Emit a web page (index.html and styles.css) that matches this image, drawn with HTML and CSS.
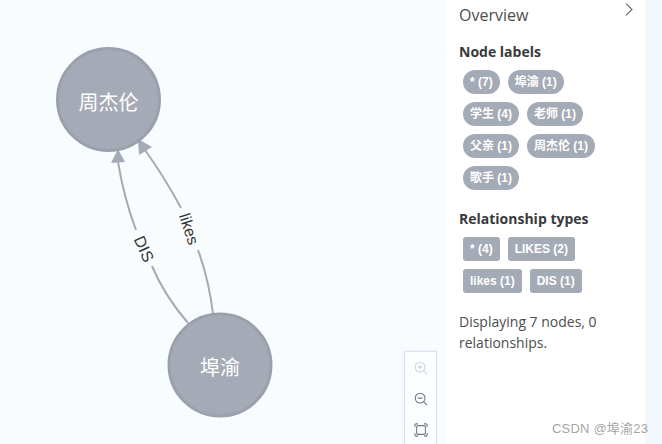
FILE: index.html
```html
<!DOCTYPE html>
<html lang="en">
<head>
<meta charset="utf-8">
<title>Graph overview</title>
<link rel="stylesheet" href="styles.css">
</head>
<body>
<div class="app">
  <main class="canvas">
    <svg class="graph" width="445" height="444" viewBox="0 0 445 444">
      <path class="edge" d="M188 323 Q164 295 152 266"/>
      <path class="edge" d="M136 230 Q124 198 118 162"/>
      <polygon class="arrow" points="118,149 111,163 125,162"/>
      <path class="edge" d="M213 314 Q209 280 198 250"/>
      <path class="edge" d="M181 208 Q165 178 145 150"/>
      <polygon class="arrow" points="138,139 139,155 152,147"/>
      <text class="edge-label" transform="translate(144 249) rotate(66)">DIS</text>
      <text class="edge-label" transform="translate(189 229) rotate(72)">likes</text>
      <circle class="node" cx="108.5" cy="99.5" r="51"/>
      <text class="node-label" x="108.5" y="110">周杰伦</text>
      <circle class="node" cx="220" cy="365" r="51"/>
      <text class="node-label" x="220" y="375">埠渝</text>
    </svg>
    <div class="zoom-bar">
      <button class="zoom-btn is-off" aria-label="Zoom in">
        <svg width="14" height="14" viewBox="0 0 16 16"><circle cx="7" cy="7" r="5.6"/><path d="M11 11l4 4M7 4.4v5.2M4.4 7h5.2"/></svg>
      </button>
      <button class="zoom-btn" aria-label="Zoom out">
        <svg width="14" height="14" viewBox="0 0 16 16"><circle cx="7" cy="7" r="5.6"/><path d="M11 11l4 4M4.4 7h5.2"/></svg>
      </button>
      <button class="zoom-btn" aria-label="Fit">
        <svg width="14" height="14" viewBox="0 0 16 16"><rect x="3" y="3" width="10" height="10" rx="1.5"/><path d="M4.5 1H2.5A1.5 1.5 0 0 0 1 2.500V4.500M11.500 1h2A1.500 1.500 0 0 1 15 2.500V4.500M4.500 15H2.500A1.500 1.500 0 0 1 1 13.500V11.500M11.500 15h2A1.500 1.500 0 0 0 15 13.500V11.500"/></svg>
      </button>
    </div>
  </main>
  <aside class="panel">
    <header class="panel-head">
      <h1 class="panel-title">Overview</h1>
      <svg class="chevron" width="8" height="13" viewBox="0 0 8 13"><path d="M1 .7l6 5.8-6 5.8"/></svg>
    </header>
    <h2 class="section-title">Node labels</h2>
    <div class="chips">
      <span class="chip pill">* (7)</span>
      <span class="chip pill">埠渝 (1)</span>
      <span class="chip pill">学生 (4)</span>
      <span class="chip pill">老师 (1)</span>
      <span class="chip pill">父亲 (1)</span>
      <span class="chip pill">周杰伦 (1)</span>
      <span class="chip pill">歌手 (1)</span>
    </div>
    <h2 class="section-title rel-title">Relationship types</h2>
    <div class="chips">
      <span class="chip">* (4)</span>
      <span class="chip">LIKES (2)</span>
      <span class="chip">likes (1)</span>
      <span class="chip">DIS (1)</span>
    </div>
    <p class="summary">Displaying 7 nodes, 0 relationships.</p>
  </aside>
  <div class="gutter"></div>
  <div class="watermark">CSDN @埠渝23</div>
</div>
</body>
</html>
```
FILE: styles.css
```css
* { box-sizing: border-box; }
html, body { margin: 0; height: 100%; overflow: hidden; }
body { background: #f9fbfe; font-family: "Open Sans", "Noto Sans CJK SC", sans-serif; }
.app { position: relative; display: flex; width: 662px; height: 444px; overflow: hidden; }
.canvas { position: relative; width: 445px; height: 444px; background: #f9fcff; }
.graph { display: block; }
.edge { fill: none; stroke: #a5abb6; stroke-width: 2; }
.arrow { fill: #a5abb6; }
.edge-label { font: 16px "Liberation Sans", "Noto Sans CJK SC", sans-serif; fill: #333; text-anchor: middle; dominant-baseline: central; }
.node { fill: #a5abb6; stroke: #9aa1ac; stroke-width: 3; }
.node-label { font: 20px "Noto Sans CJK SC", sans-serif; fill: #fff; text-anchor: middle; }
.zoom-bar { position: absolute; left: 404px; top: 351px; width: 33px; height: 100px; display: flex; flex-direction: column; background: #fbfdff; border: 1px solid #dde3ef; box-shadow: 0 0 3px rgba(200, 210, 230, .4); }
.zoom-btn { height: 31px; width: 31px; padding: 0; border: 0; background: none; display: flex; align-items: center; justify-content: center; }
.zoom-btn svg { fill: none; stroke: #717680; stroke-width: 1.2; }
.zoom-btn.is-off svg { stroke: #cfd2d6; }
.panel { width: 200px; height: 444px; background: #fff; padding: 0 14px; color: #333; box-shadow: 0 0 4px rgba(190, 205, 225, .6); }
.panel-head { display: flex; justify-content: space-between; height: 32px; }
.panel-title { margin: 4px 0 0; font-size: 16px; line-height: 22px; font-weight: 400; color: #4d4d4d; }
.chevron { margin: 3px -2px 0 0; fill: none; stroke: #666; stroke-width: 1.1; }
.section-title { margin: 10px 0 0; font-size: 14px; line-height: 20px; font-weight: 700; color: #3a3a3a; }
.rel-title { margin-top: 19px; }
.chips { display: flex; flex-wrap: wrap; gap: 8px; padding: 8px 30px 0 4px; }
.chip { display: inline-block; height: 24px; padding: 0 7px; background: #a5abb6; color: #fff; border-radius: 3px; font: 700 12px/24px "Liberation Sans", "Noto Sans CJK SC", sans-serif; white-space: nowrap; }
.pill { border-radius: 12px; }
.summary { margin: 18px 0 0; font-size: 14px; line-height: 21px; color: #4d4d4d; }
.gutter { flex: 1; background: #f3f8fc; }
.watermark { position: absolute; left: 552px; top: 420px; font: 13px/18px "Liberation Sans", "Noto Sans CJK SC", sans-serif; letter-spacing: .2px; color: rgba(110, 110, 110, .65); white-space: nowrap; }
```
